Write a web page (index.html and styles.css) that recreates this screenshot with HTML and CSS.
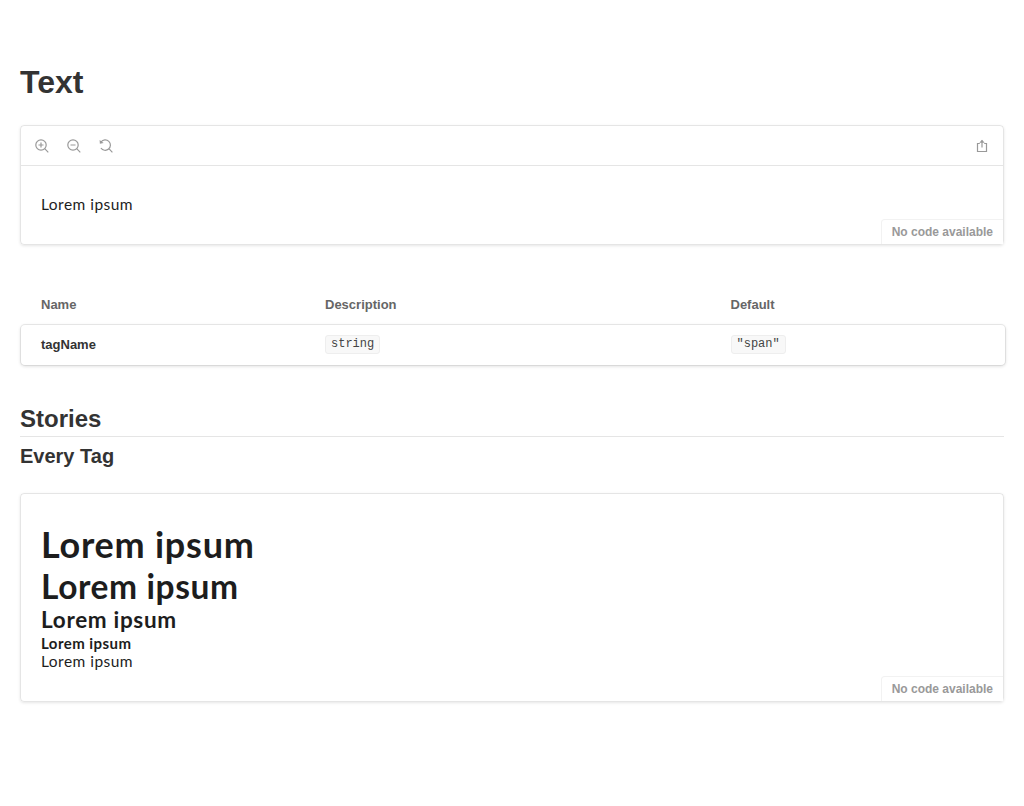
FILE: index.html
```html
<!DOCTYPE html>
<html lang="en">
<head>
<meta charset="utf-8">
<title>Text</title>
<link rel="stylesheet" href="styles.css">
</head>
<body>
<main class="docs">
  <h1 class="title">Text</h1>
  <section class="preview">
    <div class="toolbar">
      <div class="tools">
        <svg class="icon" viewBox="0 0 14 14"><circle cx="6" cy="6" r="5.2"/><path d="M9.7 9.7l3.6 3.6M3.5 6h5M6 3.5v5"/></svg>
        <svg class="icon" viewBox="0 0 14 14"><circle cx="6" cy="6" r="5.2"/><path d="M9.7 9.7l3.6 3.6M3.5 6h5"/></svg>
        <svg class="icon" viewBox="0 0 14 14"><path d="M2.1 2.9A5.2 5.2 0 1 1 1.9 9M9.9 9.7l3.5 3.6"/><path class="solid" d="M.6 1l.3 3.8 3.7-.7z"/></svg>
      </div>
      <svg class="icon" viewBox="0 0 14 14"><path d="M4.8 4.5H2.5v8h9v-8H9.2M7 8.5V1.5"/><path class="solid" d="M4.3 3.8L7 .7l2.7 3.1z"/></svg>
    </div>
    <div class="canvas single"><span class="sample">Lorem ipsum</span></div>
    <button class="code-button">No code available</button>
  </section>
  <table class="args">
    <thead><tr><th class="name">Name</th><th class="description">Description</th><th>Default</th></tr></thead>
    <tbody><tr><td class="prop">tagName</td><td><code>string</code></td><td><code>"span"</code></td></tr></tbody>
  </table>
  <h2 class="stories">Stories</h2>
  <h3 class="story-title">Every Tag</h3>
  <section class="preview">
    <div class="canvas tags">
      <div class="sample heading-1">Lorem ipsum</div>
      <div class="sample heading-2">Lorem ipsum</div>
      <div class="sample heading-3">Lorem ipsum</div>
      <div class="sample heading-4">Lorem ipsum</div>
      <div class="sample">Lorem ipsum</div>
    </div>
    <button class="code-button">No code available</button>
  </section>
</main>
</body>
</html>
```
FILE: styles.css
```css
* { box-sizing: border-box; }
body { margin: 0; background: #fff; color: #333; font-family: "Liberation Sans", Arial, sans-serif; }
.docs { padding: 64px 20px; }
h1, h2, h3 { margin: 0; font-weight: 700; }
.title { font-size: 32px; line-height: 36px; margin-bottom: 25px; }
.preview { position: relative; border: 1px solid rgba(0,0,0,.1); border-radius: 4px; box-shadow: 0 1px 3px rgba(0,0,0,.1); }
.toolbar { height: 40px; display: flex; justify-content: space-between; align-items: center; padding: 1px 14px 0; border-bottom: 1px solid rgba(0,0,0,.1); }
.tools { display: flex; gap: 18px; }
.icon { display: block; width: 14px; height: 14px; fill: none; stroke: #999; stroke-width: 1.2; }
.solid { fill: #999; stroke: none; }
.canvas { padding: 30px 20px; }
.single { padding: 29px 20px 31px; }
.tags { padding: 28px 20px 31px; }
.sample { display: block; color: #1d1d1d; font: 400 15.5px/18px Lato, sans-serif; letter-spacing: .47px; }
.heading-1 { font-size: 36px; line-height: 44px; font-weight: 700; letter-spacing: .75px; }
.heading-2 { font-size: 33.5px; line-height: 40px; font-weight: 700; letter-spacing: .6px; }
.heading-3 { font-size: 22.5px; line-height: 28px; font-weight: 700; letter-spacing: .68px; }
.heading-4 { font-size: 15px; font-weight: 700; letter-spacing: .45px; }
.code-button { position: absolute; right: 0; bottom: 0; height: 25px; padding: 4px 10px; border: solid rgba(0,0,0,.05); border-width: 1px 0 0 1px; border-radius: 4px 0 0 0; background: #fff; color: #999; font: 700 12px/16px "Liberation Sans", Arial, sans-serif; }
.args { width: 984px; margin: 40px 1px 39px; border-spacing: 0; table-layout: fixed; font-size: 13px; line-height: 20px; text-align: left; }
.args th { height: 40px; padding: 10px 0; color: #666; }
.args td { height: 40px; padding: 10px 0; vertical-align: top; }
.args th:first-child, .args td:first-child { padding-left: 20px; }
.name { width: 304px; }
.description { width: 405.5px; }
.prop { font-weight: 700; }
.args tbody { border-radius: 4px; box-shadow: 0 1px 3px 1px rgba(0,0,0,.1), 0 0 0 1px rgba(0,0,0,.065); }
.args code { display: block; width: max-content; height: 19px; padding: 0 5px; border: 1px solid #eee; border-radius: 3px; background: #f8f8f8; color: #444; font: 12px/16px "Liberation Mono", monospace; }
.stories { height: 33px; padding: 1px 0 3px; border-bottom: 1px solid rgba(0,0,0,.1); font-size: 24px; line-height: 28px; }
.story-title { margin: 7px 0 24px; font-size: 20px; line-height: 25px; }
```
